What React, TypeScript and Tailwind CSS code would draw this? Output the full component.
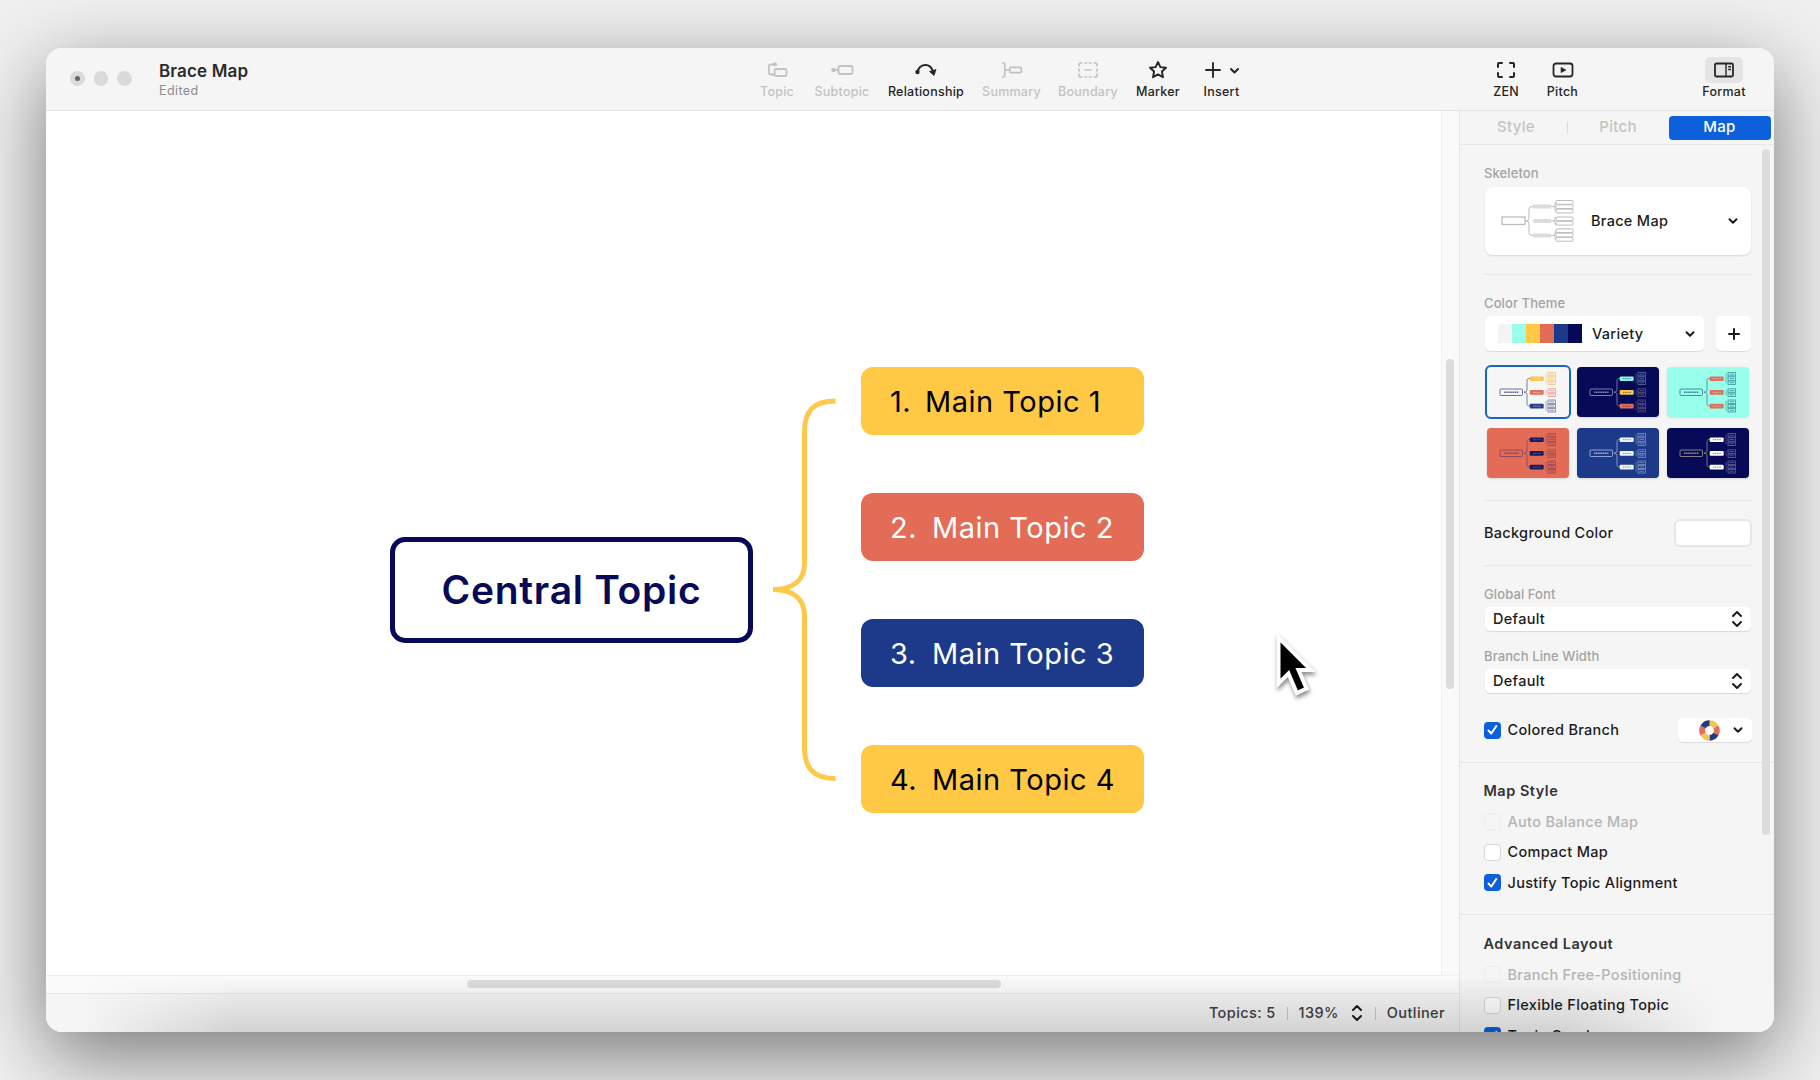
import type { ReactNode } from 'react'
import { ChevronDown } from 'lucide-react'

const swatches = ['#f4f4f4', '#98ffea', '#ffc845', '#e36c56', '#1d3a8a', '#060a56']

const thumbs = [
  { bg: '#f6f6f6', line: '#5a5d90', topics: ['#f8c64f', '#e0705c', '#26408a'], sub: ['#f2c77c', '#e2988c', '#7078a4'] },
  { bg: '#070a57', line: '#8a8db8', topics: ['#8ff5e3', '#f8c64f', '#e0705c'], sub: ['#5a70a4', '#5c5a84', '#5c5080'] },
  { bg: '#98ffea', line: '#3c7f92', topics: ['#e0705c', '#e0705c', '#e0705c'], sub: ['#3f8fa0', '#3f8fa0', '#3f8fa0'] },
  { bg: '#e36c56', line: '#87445c', topics: ['#141d60', '#141d60', '#141d60'], sub: ['#95485a', '#95485a', '#95485a'] },
  { bg: '#1d3a8a', line: '#a3b0d4', topics: ['#f1f4fa', '#f1f4fa', '#f1f4fa'], sub: ['#7f92c2', '#7f92c2', '#7f92c2'] },
  { bg: '#070a57', line: '#8f8f88', topics: ['#ffffff', '#ffffff', '#ffffff'], sub: ['#63669a', '#63669a', '#63669a'] },
]

// y offsets of the subtopic boxes, one list per main topic
const subRows = [
  [5.5, 9.8, 14.1],
  [21.8, 26.1],
  [33, 37.3, 41.6],
]

function Thumb({ data, selected }: { data: (typeof thumbs)[number]; selected?: boolean }) {
  return (
    <div
      className={
        selected
          ? 'h-[54px] w-[86px] overflow-hidden rounded-[6px] border-[2.5px] border-[#1b62cc]'
          : 'mx-[2px] my-[2px] h-[50px] w-[82px] overflow-hidden rounded-[4px] shadow-sm'
      }
      style={{ background: data.bg }}
    >
      <svg viewBox="0 0 82 50" className="h-full w-full" fill="none">
        <rect x="13" y="22" width="22.5" height="6.5" rx="1" stroke={data.line} strokeWidth="0.9" />
        <path d="M17 25.3h15" stroke={data.line} strokeWidth="1.6" strokeDasharray="1.5 0.6" />
        <path d="M43 11.5c-3 0-3 1-3 3v8.5q0 2-3 2.2q3 .2 3 2.200v8.500c0 2 0 3 3 3" stroke={data.line} strokeWidth="0.8" />
        {data.topics.map((c, i) => (
          <g key={i}>
            <rect x="42.7" y={9.4 + i * 13.7} width="14" height="4.6" rx="1" fill={c} />
            <path d={`M46 ${11.7 + i * 13.7}h8`} stroke={data.bg} strokeWidth="0.9" strokeDasharray="1.2 0.6" opacity="0.6" />
            <path d={`M59 ${subRows[i][0] + 1}V${subRows[i][subRows[i].length - 1] + 2}`} stroke={data.sub[i]} strokeWidth="0.6" />
            {subRows[i].map((y) => (
              <rect key={y} x="61" y={y} width="7.5" height="3.4" stroke={data.sub[i]} strokeWidth="0.8" />
            ))}
            {subRows[i].map((y) => (
              <path key={y} d={`M62.5 ${y + 1.7}h4.500`} stroke={data.sub[i]} strokeWidth="0.8" />
            ))}
          </g>
        ))}
      </svg>
    </div>
  )
}

function ToolButton({ label, className, disabled, children }: { label: string; className: string; disabled?: boolean; children: ReactNode }) {
  return (
    <div className={`flex flex-col items-center ${disabled ? 'text-[#c2c2c2]' : 'text-[#262626]'} ${className}`}>
      <div className="flex h-[26px] items-center justify-center">{children}</div>
      <span className="text-[12.5px] leading-[18px] font-medium tracking-[0.25px] whitespace-nowrap">{label}</span>
    </div>
  )
}

function UpDown({ className }: { className?: string }) {
  return (
    <svg width="12" height="18" viewBox="0 0 12 18" fill="none" stroke="#1c1c1c" strokeWidth="2" strokeLinecap="round" strokeLinejoin="round" className={className}>
      <path d="M2 6l4-4 4 4M2 12l4 4 4-4" />
    </svg>
  )
}

function Check({ label, checked, disabled }: { label: string; checked?: boolean; disabled?: boolean }) {
  return (
    <div className="flex h-[30.5px] shrink-0 items-center">
      {checked ? (
        <span className="flex h-[17px] w-[17px] items-center justify-center rounded-[4px] bg-[#0d60dc]">
          <svg width="11" height="12" viewBox="0 0 11 12" fill="none" stroke="#fff" strokeWidth="2" strokeLinecap="round" strokeLinejoin="round">
            <path d="M1.5 6.5L4.3 9.5L9.3 2" />
          </svg>
        </span>
      ) : (
        <span className={disabled ? 'h-[17px] w-[17px] rounded-[4px] border border-[#eeeeee] bg-[#f5f5f5]' : 'h-[17px] w-[17px] rounded-[4px] border border-[#d6d6d6] bg-white'} />
      )}
      <span className={`ml-[7px] text-[14.5px] font-medium tracking-[0.3px] whitespace-nowrap ${disabled ? 'text-[#b4b4b4]' : 'text-[#1c1c1c]'}`}>{label}</span>
    </div>
  )
}

function PopUp({ value }: { value: string }) {
  return (
    <div className="ml-[1px] flex h-[24px] w-[266px] items-center justify-between rounded-[5px] bg-white pr-[8px] pl-[8px] shadow-[0_1px_1px_rgba(0,0,0,0.12)]">
      <span className="text-[14.5px] font-medium tracking-[0.3px] text-[#1c1c1c]">{value}</span>
      <UpDown />
    </div>
  )
}

const topics = [
  { n: '1.', label: 'Main Topic 1', cls: 'top-[257px] bg-[#ffc845] text-black', gap: 'w-[35px]' },
  { n: '2.', label: 'Main Topic 2', cls: 'top-[383px] bg-[#e36c56] text-white', gap: 'w-[42px]' },
  { n: '3.', label: 'Main Topic 3', cls: 'top-[509px] bg-[#1d3a8a] text-white', gap: 'w-[42px]' },
  { n: '4.', label: 'Main Topic 4', cls: 'top-[635px] bg-[#ffc845] text-black', gap: 'w-[42px]' },
]

function Toolbar() {
  return (
    <header className="flex h-[63px] shrink-0 border-b border-[#e4e4e4] bg-[#f5f5f5]">
      <div className="flex w-[113px] gap-[9px] pt-[23px] pl-[24px]">
        <span className="flex h-[14.5px] w-[14.5px] items-center justify-center rounded-full bg-[#dadada]">
          <span className="h-[5px] w-[5px] rounded-full bg-[#666]" />
        </span>
        <span className="h-[14.5px] w-[14.5px] rounded-full bg-[#dadada]" />
        <span className="h-[14.5px] w-[14.5px] rounded-full bg-[#dadada]" />
      </div>
      <div className="w-[591px] pt-[12px]">
        <div className="text-[17px] leading-[22px] font-semibold tracking-[0.15px] text-[#2b2b2b]">Brace Map</div>
        <div className="text-[12.5px] leading-[17px] tracking-[0.4px] text-[#8c8c8c]">Edited</div>
      </div>
      <div className="flex pt-[9px]">
        <ToolButton label="Topic" className="w-[54px]" disabled>
          <svg width="22" height="20" viewBox="0 0 22 20" fill="none" stroke="currentColor" strokeWidth="1.8">
            <rect x="8.5" y="9" width="12" height="7" rx="1.5" />
            <path d="M8.500 14.500H5Q3 14.500 3 12.500V6Q3 4.500 4.500 4.500H8" />
            <circle cx="9" cy="4.300" r="2" fill="currentColor" stroke="none" />
          </svg>
        </ToolButton>
        <ToolButton label="Subtopic" className="w-[76px]" disabled>
          <svg width="24" height="20" viewBox="0 0 24 20" fill="none" stroke="currentColor" strokeWidth="1.8">
            <rect x="8.5" y="6" width="14" height="8" rx="1.5" />
            <path d="M3 10h5" />
            <circle cx="3.5" cy="10" r="2.3" fill="currentColor" stroke="none" />
          </svg>
        </ToolButton>
        <ToolButton label="Relationship" className="w-[92px]">
          <svg width="24" height="20" viewBox="0 0 24 20" fill="none" stroke="currentColor" strokeWidth="2">
            <path d="M3.5 12C5.500 3.500 16 2 19 11.500" />
            <circle cx="3.5" cy="12" r="2.2" fill="currentColor" stroke="none" />
            <path d="M15.500 11.500L22 9.500L20 15.500Z" fill="currentColor" strokeWidth="0.8" strokeLinejoin="round" />
          </svg>
        </ToolButton>
        <ToolButton label="Summary" className="w-[79px]" disabled>
          <svg width="22" height="20" viewBox="0 0 22 20" fill="none" stroke="currentColor" strokeWidth="1.7">
            <path d="M1 3h1.500q1.200 0 1.200 1.300V8.500q0 1.500 1.500 1.500q-1.500 0-1.500 1.500v4.200q0 1.300-1.200 1.300H1M5 10h4" />
            <rect x="8.8" y="7.3" width="11.5" height="5.4" rx="1.2" />
          </svg>
        </ToolButton>
        <ToolButton label="Boundary" className="w-[74px]" disabled>
          <svg width="22" height="20" viewBox="0 0 22 20" fill="none" stroke="currentColor" strokeWidth="1.7">
            <path d="M5.500 3H4Q2 3 2 5V6.500M2 8.500v3M2 13.500v1.500q0 2 2 2h1.500M7.500 17h2.700M11.800 17h2.700M16.500 17h1.500q2 0 2-2v-1.500M20 11.500v-3M20 6.500V5q0-2-2-2h-1.500M14.500 3H11.800M10.200 3H7.500M7.500 10h7" />
          </svg>
        </ToolButton>
        <ToolButton label="Marker" className="w-[66px]">
          <svg width="20" height="20" viewBox="0 0 20 20" fill="none" stroke="currentColor" strokeWidth="1.9" strokeLinejoin="round">
            <path d="M10 2L12.400 7.100L18 7.700L13.900 11.500L15 17.200L10 14.400L5 17.200L6.100 11.500L2 7.700L7.600 7.100Z" />
          </svg>
        </ToolButton>
        <ToolButton label="Insert" className="w-[61px]">
          <svg width="36" height="20" viewBox="0 0 36 20" fill="none" stroke="currentColor" strokeWidth="1.9" strokeLinecap="round" strokeLinejoin="round">
            <path d="M2 10H16M9 3V17" />
            <path d="M27 9L30.500 12.500L34 9" strokeWidth="2" />
          </svg>
        </ToolButton>
      </div>
      <div className="ml-auto flex pt-[9px] pr-[22px]">
        <ToolButton label="ZEN" className="w-[56px]">
          <svg width="20" height="18" viewBox="0 0 20 18" fill="none" stroke="currentColor" strokeWidth="2" strokeLinecap="round">
            <path d="M2 6V3Q2 2 3 2H6M14 2H17Q18 2 18 3V6M18 12V15Q18 16 17 16H14M6 16H3Q2 16 2 15V12" />
          </svg>
        </ToolButton>
        <ToolButton label="Pitch" className="w-[57px]">
          <svg width="22" height="18" viewBox="0 0 22 18" fill="none" stroke="currentColor" strokeWidth="1.8">
            <rect x="1.5" y="2.5" width="19" height="13" rx="2.5" />
            <path d="M9 6.300L14 9L9 11.700Z" fill="currentColor" strokeWidth="0.5" />
          </svg>
        </ToolButton>
        <ToolButton label="Format" className="ml-[105px] w-[56px]">
          <span className="flex h-[26px] w-[38px] items-center justify-center rounded-[5px] bg-[#e4e4e4]">
            <svg width="20" height="16" viewBox="0 0 20 16" fill="none" stroke="currentColor" strokeWidth="1.8">
              <rect x="1" y="1.5" width="18" height="13" rx="1.5" />
              <path d="M12 1.500v13M14.200 4.800h2.800M14.200 7.500h2.800" strokeWidth="1.4" />
            </svg>
          </span>
        </ToolButton>
      </div>
    </header>
  )
}

function Canvas() {
  return (
    <div className="relative flex-1 overflow-hidden bg-white">
      <div className="absolute top-[426px] left-[344px] flex h-[106px] w-[363px] items-center justify-center rounded-[15px] border-[5px] border-[#070a57] text-[39px] font-semibold tracking-[0.7px] text-[#070a57]">
        Central Topic
      </div>
      <svg className="absolute top-[279px] left-[719px]" width="80" height="400" viewBox="0 0 80 400" fill="none" stroke="#fdc84b" strokeWidth="5">
        <path d="M70.500 11C48 11 39.500 21 39.500 42V173C39.500 189 30 199.500 8 199.500C30 199.500 39.500 210 39.500 226V357C39.500 378 48 388.500 70.500 388.500" />
      </svg>
      {topics.map((t) => (
        <div key={t.n} className={`absolute left-[815px] -mt-px flex h-[68px] w-[283px] items-center rounded-[12px] pt-[2px] pl-[29px] text-[29px] tracking-[0.5px] ${t.cls}`}>
          <span className={t.gap}>{t.n}</span>
          <span className="whitespace-nowrap">{t.label}</span>
        </div>
      ))}
      <svg className="absolute top-[518px] left-[1224px] drop-shadow-[1px_3px_2px_rgba(0,0,0,0.45)]" width="50" height="70" viewBox="0 0 50 70">
        <path d="M8.500 8.500V54.500L18.500 44.500L26.800 64L36.500 59.500L28.500 41H41Z" fill="#000" stroke="#fff" strokeWidth="4" />
      </svg>
    </div>
  )
}

function Sidebar() {
  return (
    <aside className="flex w-[315px] shrink-0 flex-col border-l border-[#e2e2e2] bg-[#f5f5f5]">
      <div className="flex h-[34px] shrink-0 items-center border-b border-[#e8e8e8] text-[15px] font-medium tracking-[0.3px] text-[#c4c4c4]">
        <span className="w-[107px] pl-[5px] text-center">Style</span>
        <span className="h-[11px] w-px bg-[#dadada]" />
        <span className="w-[100px] text-center">Pitch</span>
        <span className="ml-[0.500px] flex h-[24px] w-[102px] items-center justify-center rounded-[4px] bg-[#0d60dc] text-white">Map</span>
      </div>
      <div className="flex min-h-0 flex-1 overflow-hidden">
        <div className="flex w-[302px] shrink-0 flex-col">
          <div className="flex flex-col pl-[24px]">
            <div className="mt-[18px] h-[20px] text-[13px] leading-[20px] font-medium tracking-[0.1px] text-[#a3a3a3]">Skeleton</div>
            <div className="mt-[3.500px] ml-[1px] flex h-[68px] w-[266px] items-center rounded-[8px] bg-white pr-[11px] pl-[16px] shadow-[0_1px_2px_rgba(0,0,0,0.12)]">
              <svg width="74" height="44" viewBox="0 0 74 44" fill="none" stroke="#bdbdbd" strokeWidth="1">
                <rect x="1" y="18" width="23" height="7.5" strokeWidth="1.3" />
                <path d="M32 7.500Q28 7.500 28 10V19Q28 22 25 22Q28 22 28 25V34Q28 36.500 32 36.500" />
                {[5.5, 20, 34.5].map((y) => (
                  <rect key={y} x="32" y={y} width="18" height="4" fill="#dcdcdc" stroke="none" />
                ))}
                <path d="M50 7.500h3M54.500 3q-2 4.500 0 9M50 22h3M54.500 18q-2 4 0 8M50 36.500h3M54.500 32q-2 4.500 0 9" />
                {[1.5, 5.8, 10.1, 18, 22.3, 29.8, 34.1, 38.4].map((y) => (
                  <rect key={y} x="55" y={y} width="17" height="3.8" rx="1" />
                ))}
              </svg>
              <span className="ml-[16px] flex-1 text-[14.5px] font-medium tracking-[0.3px] text-[#1c1c1c]">Brace Map</span>
              <ChevronDown size={14} strokeWidth={3.4} color="#1c1c1c" />
            </div>
            <div className="mt-[19.500px] w-[268px] border-b border-[#e8e8e8]" />
            <div className="mt-[18px] h-[20px] text-[13px] leading-[20px] font-medium tracking-[0.1px] text-[#a3a3a3]">Color Theme</div>
            <div className="mt-[3px] ml-[1px] flex gap-[12px]">
              <div className="flex h-[35px] w-[219px] items-center rounded-[5px] bg-white pr-[7px] pl-[13px] shadow-[0_1px_1px_rgba(0,0,0,0.1)]">
                {swatches.map((c) => (
                  <span key={c} className="h-[19px] w-[14px]" style={{ background: c }} />
                ))}
                <span className="ml-[10px] flex-1 text-[14.5px] font-medium tracking-[0.3px] text-[#1c1c1c]">Variety</span>
                <ChevronDown size={14} strokeWidth={3.4} color="#1c1c1c" />
              </div>
              <div className="flex h-[35px] w-[35px] items-center justify-center rounded-[5px] bg-white shadow-[0_1px_1px_rgba(0,0,0,0.1)]">
                <svg width="12" height="12" viewBox="0 0 12 12" stroke="#1c1c1c" strokeWidth="2" strokeLinecap="round">
                  <path d="M1 6H11M6 1V11" />
                </svg>
              </div>
            </div>
            <div className="mt-[14px] ml-[1px] grid w-[266px] grid-cols-[86px_86px_86px] gap-x-[4px] gap-y-[7px]">
              {thumbs.map((t, i) => (
                <Thumb key={i} data={t} selected={i === 0} />
              ))}
            </div>
            <div className="mt-[20px] w-[268px] border-b border-[#e8e8e8]" />
            <div className="flex h-[64px] w-[268px] items-center justify-between">
              <span className="text-[14.5px] font-medium tracking-[0.3px] text-[#1c1c1c]">Background Color</span>
              <span className="h-[28px] w-[78px] rounded-[6px] border-2 border-[#e6e6e6] bg-white" />
            </div>
            <div className="w-[268px] border-b border-[#e8e8e8]" />
            <div className="mt-[18px] mb-[3px] h-[20px] text-[13px] leading-[20px] font-medium tracking-[0.1px] text-[#a3a3a3]">Global Font</div>
            <PopUp value="Default" />
            <div className="mt-[14.500px] mb-[3px] h-[20px] text-[13px] leading-[20px] font-medium tracking-[0.1px] text-[#a3a3a3]">Branch Line Width</div>
            <PopUp value="Default" />
            <div className="-ml-[0.500px] mt-[22.500px] flex w-[268px] items-center justify-between">
              <Check label="Colored Branch" checked />
              <div className="flex h-[24px] w-[74px] items-center rounded-[5px] bg-white pr-[7px] pl-[21px] shadow-[0_1px_1px_rgba(0,0,0,0.1)]">
                <svg width="21" height="21" viewBox="0 0 20 20" fill="none" strokeWidth="5.5" strokeDasharray="7.33 36.64">
                  <circle cx="10" cy="10" r="7" stroke="#f5c552" transform="rotate(-90 10 10)" />
                  <circle cx="10" cy="10" r="7" stroke="#e0705c" transform="rotate(-30 10 10)" />
                  <circle cx="10" cy="10" r="7" stroke="#203a84" transform="rotate(30 10 10)" />
                  <circle cx="10" cy="10" r="7" stroke="#f5c552" transform="rotate(90 10 10)" />
                  <circle cx="10" cy="10" r="7" stroke="#e0705c" transform="rotate(150 10 10)" />
                  <circle cx="10" cy="10" r="7" stroke="#203a84" transform="rotate(210 10 10)" />
                </svg>
                <ChevronDown size={14} strokeWidth={3.4} color="#1c1c1c" className="ml-auto" />
              </div>
            </div>
          </div>
          <div className="mt-[16px] w-[314px] border-b border-[#e6e6e6]" />
          <div className="flex flex-col pl-[23.500px]">
            <div className="mt-[18px] mb-[6px] h-[20px] text-[14.5px] leading-[20px] font-semibold tracking-[0.5px] text-[#333]">Map Style</div>
            <Check label="Auto Balance Map" disabled />
            <Check label="Compact Map" />
            <Check label="Justify Topic Alignment" checked />
          </div>
          <div className="mt-[16px] w-[314px] shrink-0 border-b border-[#e6e6e6]" />
          <div className="flex flex-col pl-[23.500px]">
            <div className="mt-[18.500px] mb-[6px] h-[20px] text-[14.5px] leading-[20px] font-semibold tracking-[0.5px] text-[#333]">Advanced Layout</div>
            <Check label="Branch Free-Positioning" disabled />
            <Check label="Flexible Floating Topic" />
            <Check label="Topic Overlap" checked />
          </div>
        </div>
        <div className="mt-[4px] h-[686px] w-[8px] rounded-full bg-[#dcdcdc]" />
      </div>
    </aside>
  )
}

export default function App() {
  return (
    <div className="h-[1080px] w-[1820px] overflow-hidden bg-[#f0f0f0] px-[46px] pt-[48px] font-['Inter',sans-serif]">
      <div className="relative flex h-[984px] w-[1728px] flex-col rounded-[16px] shadow-[0_24px_80px_rgba(0,0,0,0.5)]">
        <div className="flex h-full flex-col overflow-hidden rounded-[16px] bg-[#f5f5f5]">
          <Toolbar />
          <div className="flex min-h-0 flex-1">
            <div className="flex min-w-0 flex-1 flex-col">
              <div className="flex min-h-0 flex-1">
                <Canvas />
                <div className="w-[18px] border-l border-[#f0f0f0] bg-[#fafafa] pt-[248px] pl-[4px]">
                  <div className="h-[330px] w-[8px] rounded-full bg-[#dcdcdc]" />
                </div>
              </div>
              <div className="h-[18px] border-t border-[#f0f0f0] bg-[#fafafa] pt-[4px] pl-[421px]">
                <div className="h-[8px] w-[534px] rounded-full bg-[#dcdcdc]" />
              </div>
              <div className="flex h-[39px] items-center justify-end border-t border-[#e6e6e6] bg-[#f5f5f5] pr-[14px] text-[14.5px] font-medium tracking-[0.4px] text-[#404040]">
                <span>Topics: 5</span>
                <span className="mx-[11px] h-[13px] w-px bg-[#c8c8c8]" />
                <span>139%</span>
                <UpDown className="mx-[12px]" />
                <span className="mr-[11px] h-[13px] w-px bg-[#c8c8c8]" />
                <span>Outliner</span>
              </div>
            </div>
            <Sidebar />
          </div>
        </div>
        <div className="pointer-events-none absolute inset-x-0 bottom-0 h-[56px] rounded-b-[16px] bg-linear-to-b from-black/0 to-black/14 mask-[linear-gradient(to_right,transparent_2%,black_11%,black_88%,transparent_97%)]" />
      </div>
    </div>
  )
}
